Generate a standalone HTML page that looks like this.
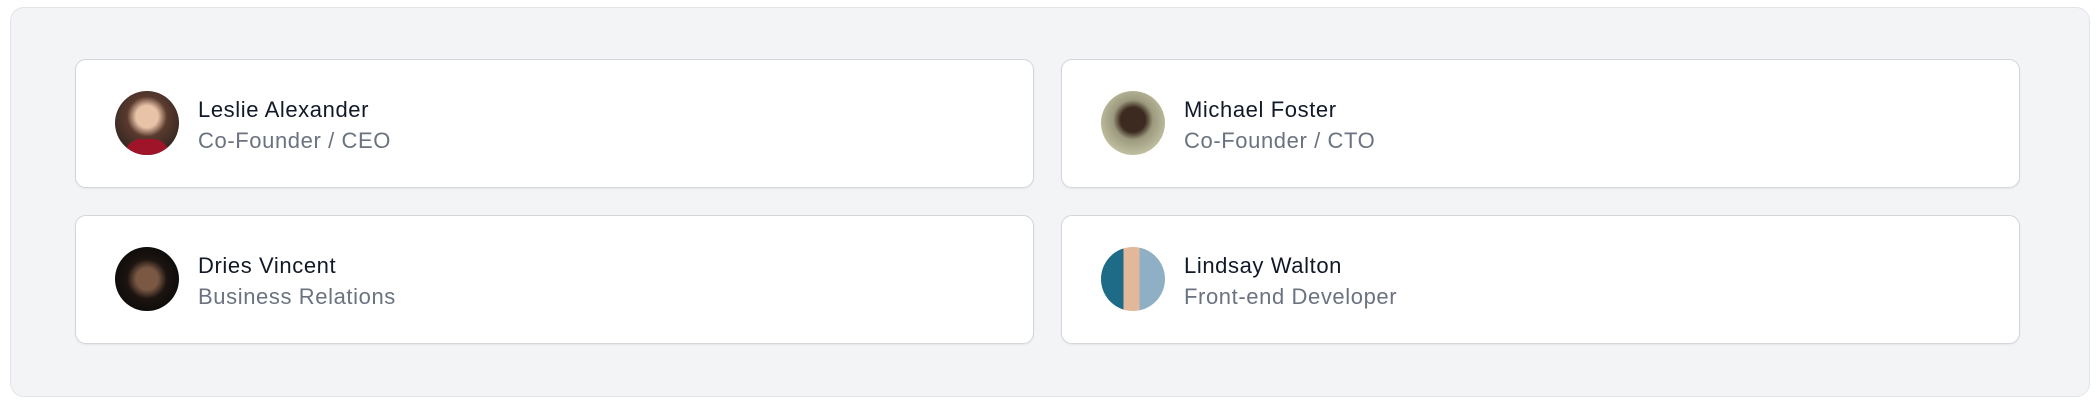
<!DOCTYPE html>
<html><head><meta charset="utf-8"><style>
*{box-sizing:border-box;margin:0;padding:0}
body{width:2097px;height:406px;background:#fff;font-family:"Liberation Sans",sans-serif;position:relative;overflow:hidden}
.outer{position:absolute;left:10px;top:7px;width:2080px;height:390px;background:#f3f4f6;border:1px solid #e2e4e8;border-radius:14px}
.card{position:absolute;width:959px;height:129px;background:#fff;border:1px solid #d4d6db;border-radius:11px;box-shadow:0 1px 2px rgba(0,0,0,.06)}
.av{position:absolute;left:39px;top:31px;width:64px;height:64px;border-radius:50%;overflow:hidden}
.n{position:absolute;left:122px;top:37px;font-size:22px;letter-spacing:0.6px;color:#111827}
.r{position:absolute;left:122px;top:68px;font-size:22px;letter-spacing:0.6px;color:#6b7280}
</style></head><body>
<div class="outer"></div>
<div class="card" style="left:75px;top:59px"><div class="av" style="background:radial-gradient(circle at 50% 40%,#e9c3a8 0 22%,#5a3a2e 40%,#3a2a24 70%);"><div style="position:absolute;bottom:0;left:10px;width:44px;height:16px;background:#a0142a;border-radius:20px 20px 0 0"></div></div><div class="n">Leslie Alexander</div><div class="r">Co-Founder / CEO</div></div>
<div class="card" style="left:1061px;top:59px"><div class="av" style="background:radial-gradient(circle at 50% 45%,#3c2a20 0 26%,#9c9a7e 42%,#c9c7a8 80%);"></div><div class="n">Michael Foster</div><div class="r">Co-Founder / CTO</div></div>
<div class="card" style="left:75px;top:215px"><div class="av" style="background:radial-gradient(circle at 50% 50%,#7a5844 0 24%,#1c1410 44%,#0a0a0a 80%);"></div><div class="n">Dries Vincent</div><div class="r">Business Relations</div></div>
<div class="card" style="left:1061px;top:215px"><div class="av" style="background:linear-gradient(90deg,#1d6b86 0 35%,#e2b79a 35% 60%,#8fb0c4 60%);"></div><div class="n">Lindsay Walton</div><div class="r">Front-end Developer</div></div>
</body></html>
